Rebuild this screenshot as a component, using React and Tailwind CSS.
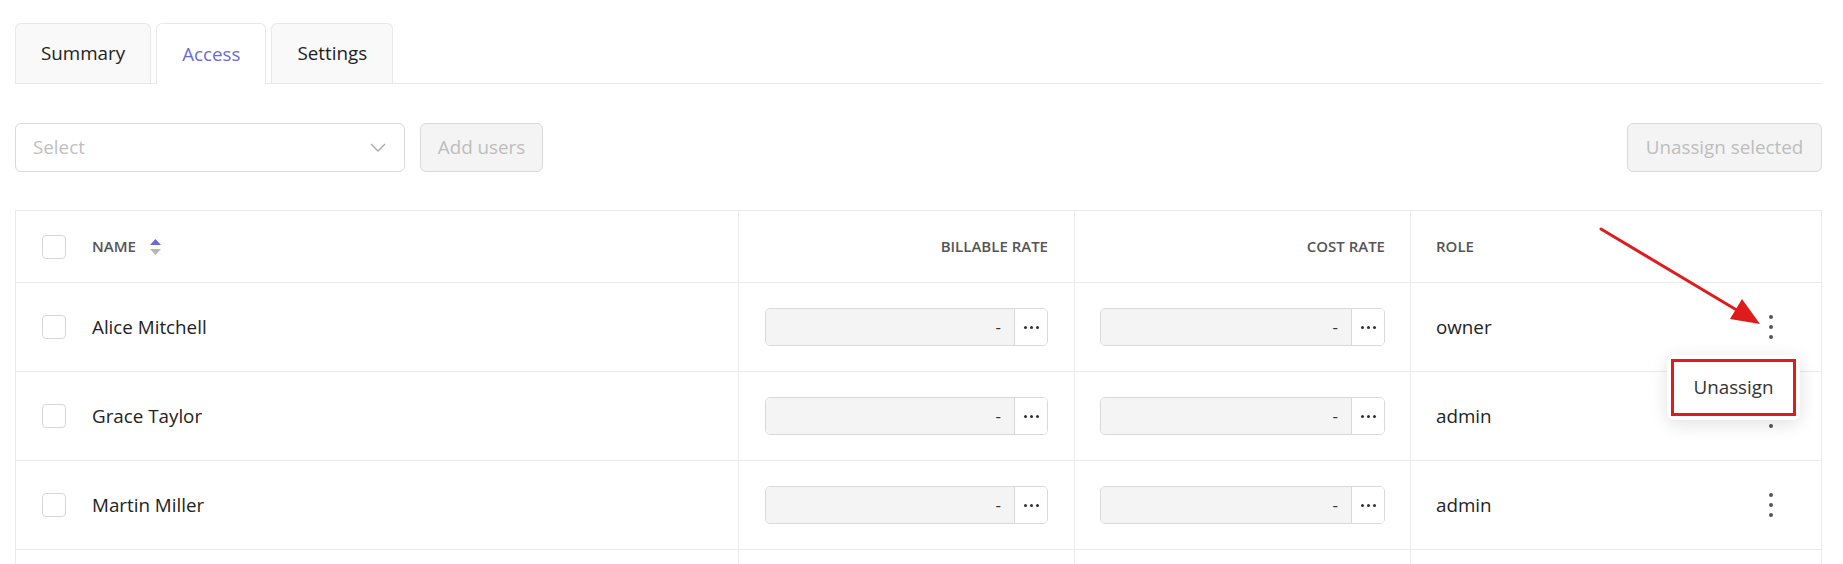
import React, { useState } from "react";

const FONT = { fontFamily: '"Open Sans", "Noto Sans", sans-serif' };

const TABS = ["Summary", "Access", "Settings"];

const MEMBERS = [
  { id: 1, name: "Alice Mitchell", role: "owner" },
  { id: 2, name: "Grace Taylor", role: "admin" },
  { id: 3, name: "Martin Miller", role: "admin" },
  { id: 4, name: "Olivia Brown", role: "member" },
];

const Checkbox = () => (
  <span className="block h-6 w-6 shrink-0 rounded-[4px] border border-[#d6d6d6] bg-white" />
);

const SortIcon = () => (
  <span className="ml-[14px] flex flex-col items-center gap-[4px]">
    <svg width="11" height="6" viewBox="0 0 11 6">
      <path d="M5.5 0 L11 6 L0 6 Z" fill="#6b6bd8" />
    </svg>
    <svg width="11" height="6" viewBox="0 0 11 6">
      <path d="M0 0 L11 0 L5.5 6 Z" fill="#b5b5b5" />
    </svg>
  </span>
);

const Kebab = () => (
  <button className="flex h-8 w-6 flex-col items-center justify-center gap-[6px]">
    <span className="h-[4px] w-[4px] rounded-full bg-[#555]" />
    <span className="h-[4px] w-[4px] rounded-full bg-[#555]" />
    <span className="h-[4px] w-[4px] rounded-full bg-[#555]" />
  </button>
);

// rate field: read-only value plus a small "more" button on the right
const RateInput = () => (
  <div className="flex h-[38px] w-full overflow-hidden rounded-[5px] border border-[#d9d9d9]">
    <div className="flex flex-1 items-center justify-end bg-[#f4f4f4] pr-[13px] text-[17px] text-[#333]">
      -
    </div>
    <button className="flex w-[33px] items-center justify-center gap-[3px] border-l border-[#d9d9d9] bg-white">
      <span className="h-[3px] w-[3px] rounded-full bg-[#333]" />
      <span className="h-[3px] w-[3px] rounded-full bg-[#333]" />
      <span className="h-[3px] w-[3px] rounded-full bg-[#333]" />
    </button>
  </div>
);

const RowMenu = () => (
  <div className="absolute right-[21px] top-[72px] z-10 rounded-[7px] bg-white p-[4px] shadow-[0_4px_18px_rgba(0,0,0,0.12)]">
    <div className="flex h-[57px] w-[125px] items-center justify-center border-[3px] border-[#e01b1b] text-[18.8px] text-[#333]">
      Unassign
    </div>
  </div>
);

export default function App() {
  const [tab, setTab] = useState("Access");
  const [menuRow] = useState(1);

  return (
    <div className="relative h-[564px] overflow-hidden bg-white pl-[15px] pr-[21px] pt-[23px]" style={FONT}>
      {/* Tabs */}
      <div className="flex h-[61px] items-end gap-[5px] border-b border-[#e8e8ea]">
        {TABS.map((t) => {
          const active = t === tab;
          return (
            <button
              key={t}
              onClick={() => setTab(t)}
              className={
                active
                  ? "-mb-px flex h-[61px] items-center rounded-t-[6px] border border-b-0 border-[#e8e8ea] bg-white px-[25px] text-[18.8px] text-[#6b6bd8]"
                  : "flex h-[60px] items-center rounded-t-[6px] border border-b-0 border-[#e8e8ea] bg-[#f9f9f9] px-[25px] text-[18.8px] text-[#222]"
              }
            >
              {t}
            </button>
          );
        })}
      </div>

      {/* Toolbar */}
      <div className="mt-[39px] flex h-[49px] items-center">
        <div className="flex h-[49px] w-[390px] items-center justify-between rounded-[6px] border border-[#d9d9d9] bg-white pl-[17px] pr-[18px]">
          <span className="text-[18.8px] text-[#c0c0c0]">Select</span>
          <svg width="16" height="9" viewBox="0 0 16 9" fill="none">
            <path d="M1 1 L8 8 L15 1" stroke="#a8a8a8" strokeWidth="1.3" />
          </svg>
        </div>
        <button className="ml-[15px] h-[49px] w-[123px] rounded-[6px] border border-[#d9d9d9] bg-[#f4f4f4] text-[18.8px] text-[#bdbdbd]">
          Add users
        </button>
        <button className="ml-auto h-[49px] w-[195px] rounded-[6px] border border-[#d9d9d9] bg-[#f4f4f4] text-[18.8px] text-[#bdbdbd]">
          Unassign selected
        </button>
      </div>

      {/* Members table */}
      <div className="mt-[38px] border border-[#ebebeb]">
        <div className="grid h-[72px] grid-cols-[723px_336px_336px_1fr] border-b border-[#ebebeb] text-[15px] font-semibold uppercase text-[#555]">
          <div className="flex items-center border-r border-[#ebebeb] pl-[26px]">
            <Checkbox />
            <span className="ml-[26px]">Name</span>
            <SortIcon />
          </div>
          <div className="flex items-center justify-end border-r border-[#ebebeb] pr-[26px]">Billable rate</div>
          <div className="flex items-center justify-end border-r border-[#ebebeb] pr-[25px]">Cost rate</div>
          <div className="flex items-center pl-[25px]">Role</div>
        </div>

        {MEMBERS.map((m) => (
          <div
            key={m.id}
            className="grid h-[89px] grid-cols-[723px_336px_336px_1fr] border-b border-[#ebebeb] text-[18.8px] text-[#222]"
          >
            <div className="flex items-center border-r border-[#ebebeb] pl-[26px]">
              <Checkbox />
              <span className="ml-[26px]">{m.name}</span>
            </div>
            <div className="flex items-center border-r border-[#ebebeb] px-[26px]">
              <RateInput />
            </div>
            <div className="flex items-center border-r border-[#ebebeb] px-[25px]">
              <RateInput />
            </div>
            <div className="relative flex items-center justify-between pl-[25px] pr-[38px]">
              <span>{m.role}</span>
              <Kebab />
              {m.id === menuRow && <RowMenu />}
            </div>
          </div>
        ))}
      </div>

      {/* callout arrow pointing at the row menu */}
      <svg className="pointer-events-none absolute left-0 top-0 z-20" width="1843" height="564">
        <line x1="1601" y1="229" x2="1740" y2="312" stroke="#e01b1b" strokeWidth="3" strokeLinecap="round" />
        <path d="M1760 324 L1730 319 L1742 299 Z" fill="#e01b1b" />
      </svg>
    </div>
  );
}
